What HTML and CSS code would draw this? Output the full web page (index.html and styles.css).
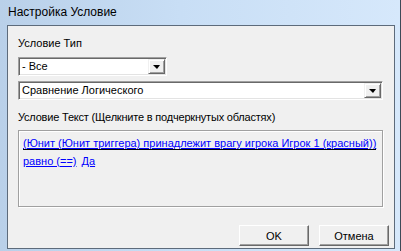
FILE: index.html
```html
<!DOCTYPE html>
<html lang="ru">
<head>
    <meta charset="UTF-8">
    <title>Настройка Условие</title>
    <link rel="stylesheet" href="styles.css">
</head>
<body>

    <div class="window">
        <div class="titlebar">Настройка Условие</div>

        <div class="client">
            <div class="label">Условие Тип</div>

            <div class="combo combo-short">
                <span class="combo-value">- Все</span>
                <span class="combo-btn"><span class="arrow"></span></span>
            </div>

            <div class="combo combo-wide">
                <span class="combo-value">Сравнение Логического</span>
                <span class="combo-btn"><span class="arrow"></span></span>
            </div>

            <div class="label label-text">Условие Текст (Щелкните в подчеркнутых областях)</div>

            <div class="textbox">
                <div class="line"><a class="link link-focus">(Юнит (Юнит триггера) принадлежит врагу игрока Игрок 1 (красный))</a></div>
                <div class="line"><a class="link">равно (==)</a><a class="link link-next">Да</a></div>
            </div>

            <div class="buttons">
                <button class="btn">OK</button>
                <button class="btn">Отмена</button>
            </div>
        </div>
    </div>

</body>
</html>
```

FILE: styles.css
```css
body {
    margin: 0;
    background-color: #c9def5;
    font-family: 'Liberation Sans', Arial, sans-serif;
    font-size: 11px;
    color: #000;
}

.window {
    width: 401px;
    height: 251px;
    box-sizing: border-box;
    padding-left: 7px;
    background: linear-gradient(to right, #b9d0e9, #c8def5 45%, #d6e8fb);
    border-right: 1px solid #3e4a58;
    overflow: hidden;
}

.titlebar {
    height: 25px;
    line-height: 24px;
    margin-left: 1px;
    font-size: 12px;
    color: #000;
}

.client {
    width: 388px;
    height: 224px;
    box-sizing: border-box;
    border: 1px solid #5d6b7b;
    background-color: #f0f0f0;
    padding: 9px 10px 0 10px;
    display: flex;
    flex-direction: column;
}

.label {
    line-height: 16px;
    height: 16px;
    white-space: nowrap;
}

.combo {
    display: flex;
    height: 19px;
    box-sizing: border-box;
    margin-top: 6px;
    background-color: #fff;
    border-top: 1px solid #a0a0a0;
    border-left: 1px solid #a0a0a0;
    border-right: 1px solid #fff;
    border-bottom: 1px solid #fff;
    box-shadow: inset 1px 1px 0 #696969, inset -1px -1px 0 #e3e3e3;
    padding: 1px;
}

.combo + .combo {
    margin-top: 5px;
}

.combo-short {
    width: 149px;
}

.combo-wide {
    width: 365px;
}

.combo-value {
    flex: 1;
    padding-left: 2px;
    line-height: 15px;
    white-space: nowrap;
}

.combo-btn {
    width: 17px;
    box-sizing: border-box;
    background-color: #f0f0f0;
    border-top: 1px solid #f0f0f0;
    border-left: 1px solid #f0f0f0;
    border-right: 1px solid #696969;
    border-bottom: 1px solid #696969;
    box-shadow: inset 1px 1px 0 #fff, inset -1px -1px 0 #a0a0a0;
    display: flex;
    justify-content: center;
    align-items: center;
}

.arrow {
    width: 0;
    height: 0;
    border-left: 4px solid transparent;
    border-right: 3px solid transparent;
    border-top: 4px solid #000;
    margin-top: 1px;
}

.label-text {
    margin-top: 9px;
    letter-spacing: -0.2px;
}

.textbox {
    width: 365px;
    height: 77px;
    box-sizing: border-box;
    margin-top: 5px;
    border: 1px solid #a0a0a0;
    box-shadow: inset 1px 1px 0 #fff, 1px 1px 0 #fff;
    padding: 3px 0 0 4px;
}

.line {
    line-height: 18px;
    height: 18px;
    white-space: nowrap;
}

.link {
    color: #0000ff;
    text-decoration: underline;
    cursor: pointer;
}

.link-focus {
    border-bottom: 1px solid #000;
}

.link-next {
    margin-left: 5px;
}

.buttons {
    display: flex;
    justify-content: flex-end;
    gap: 10px;
    margin-top: 18px;
    margin-right: -5px;
}

.btn {
    width: 70px;
    height: 21px;
    box-sizing: border-box;
    padding: 0;
    font-family: 'Liberation Sans', Arial, sans-serif;
    font-size: 11px;
    color: #000;
    background-color: #f0f0f0;
    border-top: 1px solid #fff;
    border-left: 1px solid #fff;
    border-right: 1px solid #696969;
    border-bottom: 1px solid #696969;
    box-shadow: inset -1px -1px 0 #a0a0a0;
}
```
